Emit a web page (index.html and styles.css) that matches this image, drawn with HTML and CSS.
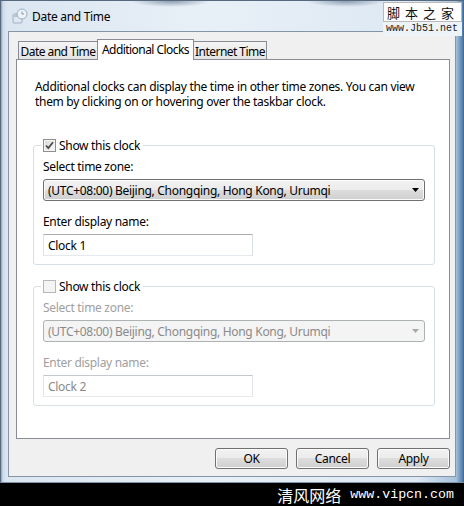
FILE: index.html
```html
<!DOCTYPE html>
<html>
<head>
<meta charset="utf-8">
<title>Date and Time</title>
<link rel="stylesheet" href="styles.css">
</head>
<body>
<div class="window">
  <div class="titlebar">
    <svg class="app-icon" width="16" height="16" viewBox="0 0 16 16">
      <rect x="1" y="6" width="9" height="9" rx="1" fill="#dfe7ef" stroke="#9fb2c6"/>
      <rect x="1" y="6" width="9" height="3" fill="#b7c8d9"/>
      <circle cx="10" cy="6" r="5" fill="#eef2f6" stroke="#9aaec3"/>
      <path d="M10 3.5V6h2" fill="none" stroke="#8297ad" stroke-width="1"/>
    </svg>
    <span class="title">Date and Time</span>
  </div>
  <div class="client">
    <div class="tabs">
      <div class="tab tab-date">Date and Time</div>
      <div class="tab tab-clocks selected">Additional Clocks</div>
      <div class="tab tab-internet">Internet Time</div>
    </div>
    <div class="panel">
      <p class="desc"><span class="line">Additional clocks can display the time in other time zones. You can view</span><span class="line">them by clicking on or hovering over the taskbar clock.</span></p>
      <fieldset class="group">
        <legend><span class="check checked"><svg width="13" height="13" viewBox="0 0 13 13"><path d="M3 6.5l2.3 2.6L10 3.2" fill="none" stroke="#4a4a4a" stroke-width="1.7"/></svg></span>Show this clock</legend>
        <div class="label">Select time zone:</div>
        <div class="select"><span class="select-text">(UTC+08:00) Beijing, Chongqing, Hong Kong, Urumqi</span><svg class="arrow" width="7" height="4" viewBox="0 0 7 4"><path d="M0 0h7L3.5 4z" fill="#000"/></svg></div>
        <div class="label label-name">Enter display name:</div>
        <div class="input">Clock 1</div>
      </fieldset>
      <fieldset class="group group-off">
        <legend><span class="check"></span>Show this clock</legend>
        <div class="label">Select time zone:</div>
        <div class="select"><span class="select-text">(UTC+08:00) Beijing, Chongqing, Hong Kong, Urumqi</span><svg class="arrow" width="7" height="4" viewBox="0 0 7 4"><path d="M0 0h7L3.5 4z" fill="#a8a8a8"/></svg></div>
        <div class="label label-name">Enter display name:</div>
        <div class="input">Clock 2</div>
      </fieldset>
    </div>
    <div class="buttons">
      <button class="btn">OK</button>
      <button class="btn">Cancel</button>
      <button class="btn">Apply</button>
    </div>
  </div>
  <div class="watermark">
    <div class="wm-top">脚本之家</div>
    <div class="wm-url">www.Jb51.net</div>
  </div>
</div>
<div class="footer"><span class="cn">清风网络</span><span class="url">www.vipcn.com</span></div>
</body>
</html>
```
FILE: styles.css
```css
* { box-sizing: border-box; }
html, body { margin: 0; padding: 0; }
body {
  width: 464px;
  height: 506px;
  overflow: hidden;
  background: #000;
  font-family: "Noto Sans", "Open Sans", sans-serif;
  font-size: 12px;
  color: #000;
}
.window {
  position: relative;
  height: 483px;
  border: 1px solid #56697f;
  border-bottom-color: #8093a8;
  letter-spacing: -0.3px;
  background:
    radial-gradient(ellipse 40px 6px at 170px 0, rgba(70,90,120,.55), transparent),
    radial-gradient(ellipse 40px 6px at 345px 0, rgba(70,90,120,.55), transparent),
    linear-gradient(90deg, #8aa4bf 0, #cfdce9 2px, #dbe6f1 6px, #e8f0f7 45%, #dde8f3 90%, #a7c2dc calc(100% - 7px), #4e7aa8 100%);
}
.titlebar {
  height: 30px;
  display: flex;
  align-items: center;
  gap: 4px;
  padding-left: 11px;
}
.app-icon { flex: none; }
.title { line-height: 15px; }
.client {
  height: 446px;
  margin: 0 7px;
  background: #f0f0f0;
  border: 1px solid #8595a7;
  padding: 7px 5px 0 7px;
}
.tabs {
  display: flex;
  align-items: flex-end;
  height: 20px;
  padding-left: 2px;
  position: relative;
  z-index: 1;
  letter-spacing: -0.55px;
}
.tab {
  height: 18px;
  border: 1px solid #898c95;
  border-bottom: none;
  background: linear-gradient(#f4f4f4, #e4e4e4);
  display: flex;
  align-items: center;
  justify-content: center;
  padding-top: 2px;
  line-height: 15px;
  white-space: nowrap;
}
.tab-date { width: 80px; }
.tab-clocks { width: 97px; margin-left: -1px; }
.tab-internet { width: 74px; margin-left: -1px; }
.tab.selected {
  height: 21px;
  background: #fff;
  margin-bottom: -1px;
  padding-top: 0;
  padding-bottom: 1px;
  position: relative;
  z-index: 2;
}
.panel {
  height: 380px;
  background: #fff;
  border: 1px solid #898c95;
  padding: 19px 0 0 16px;
}
.desc {
  margin: 0 0 29px 2px;
  white-space: nowrap;
}
.desc .line {
  display: block;
  height: 15px;
  line-height: 15px;
}
.group {
  width: 402px;
  margin: 0;
  border: 1px solid #d5dfe5;
  border-radius: 3px;
  padding: 6px 9px 8px 9px;
}
.group-off { margin-top: 14px; }
.group legend {
  margin-left: -2px;
  padding: 0 3px 0 2px;
  height: 15px;
  line-height: 15px;
  display: flex;
  align-items: center;
}
.check {
  width: 13px;
  height: 13px;
  margin-right: 3px;
  border: 1px solid #8f8f8f;
  background: linear-gradient(135deg, #d8d8d8, #fbfbfb);
  box-shadow: inset 0 0 0 1px #f4f4f4;
  position: relative;
}
.check svg { position: absolute; left: -1px; top: -1px; }
.group-off .check { border-color: #b8b8b8; background: #f4f4f4; }
.label { line-height: 15px; margin-bottom: 5px; }
.label-name { margin-top: 13px; }
.select {
  height: 22px;
  width: 382px;
  display: flex;
  align-items: center;
  justify-content: space-between;
  padding: 0 5px 0 4px;
  border: 1px solid #707070;
  border-radius: 3px;
  background: linear-gradient(#f2f2f2 0, #ebebeb 50%, #dddddd 50%, #cfcfcf 100%);
  box-shadow: inset 0 0 0 1px #fbfbfb;
}
.select-text { line-height: 15px; white-space: nowrap; }
.input {
  height: 22px;
  width: 210px;
  display: flex;
  align-items: center;
  padding-left: 4px;
  border: 1px solid;
  border-color: #abadb3 #dbdfe6 #e3e9ef #e2e3ea;
  background: #fff;
}
.group-off .label { color: #a0a0a0; }
.group-off .select {
  border-color: #adb2b5;
  background: #f4f4f4;
  box-shadow: none;
  color: #8a8a8a;
}
.group-off .input { color: #8a8a8a; border-color: #c4c8cf #e2e5ea #e6eaef #e2e5ea; }
.buttons {
  display: flex;
  justify-content: flex-end;
  gap: 8px;
  margin-top: 9px;
}
.btn {
  width: 73px;
  height: 21px;
  padding: 0;
  font: inherit;
  letter-spacing: inherit;
  color: #000;
  border: 1px solid #707070;
  border-radius: 3px;
  background: linear-gradient(#f2f2f2 0, #ebebeb 50%, #dddddd 50%, #cfcfcf 100%);
  box-shadow: inset 0 0 0 1px #fbfbfb;
}
.watermark {
  position: absolute;
  top: 1px;
  left: 382px;
  width: 79px;
  letter-spacing: 0;
}
.wm-top {
  height: 20px;
  background: #fff;
  border: 1px solid #b9b9b9;
  display: flex;
  align-items: center;
  padding-left: 3px;
  font-family: "Noto Sans CJK SC", sans-serif;
  font-size: 13px;
  letter-spacing: 5px;
  color: #111;
}
.wm-url {
  background: #eef3f8;
  padding: 1px 0 1px 3px;
  font-family: "Liberation Mono", monospace;
  font-size: 10px;
  line-height: 12px;
  color: #1a1a1a;
}
.footer {
  height: 23px;
  display: flex;
  align-items: center;
  justify-content: flex-end;
  gap: 9px;
  padding-right: 10px;
  color: #fff;
}
.cn { font-family: "Noto Sans CJK SC", sans-serif; font-size: 16px; line-height: 20px; }
.url { font-family: "Liberation Mono", monospace; font-size: 13.3px; line-height: 20px; }
```
